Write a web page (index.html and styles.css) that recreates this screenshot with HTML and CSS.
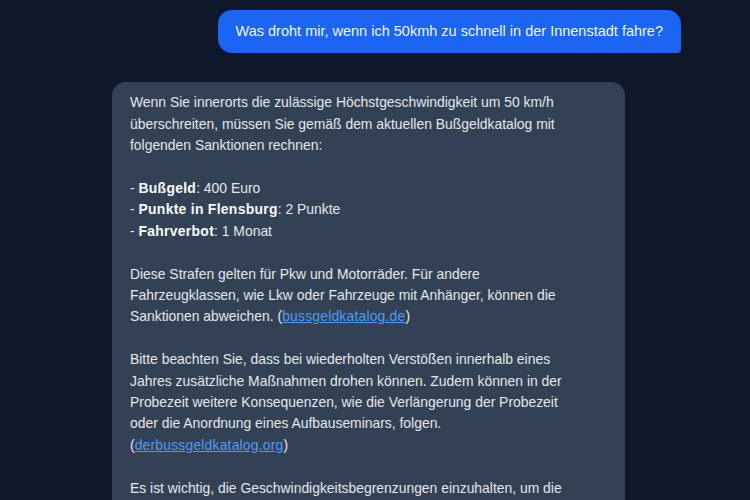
FILE: index.html
```html
<!DOCTYPE html>
<html lang="de">
<head>
<meta charset="utf-8">
<title>Chat</title>
<link rel="stylesheet" href="styles.css">
</head>
<body>
<div class="chat">
  <div class="msg user">Was droht mir, wenn ich 50kmh zu schnell in der Innenstadt fahre?</div>
  <div class="msg bot">
    <p>Wenn Sie innerorts die zulässige Höchstgeschwindigkeit um 50 km/h überschreiten, müssen Sie gemäß dem aktuellen Bußgeldkatalog mit folgenden Sanktionen rechnen:</p>
    <p>- <b>Bußgeld</b>: 400 Euro<br>- <b>Punkte in Flensburg</b>: 2 Punkte<br>- <b>Fahrverbot</b>: 1 Monat</p>
    <p>Diese Strafen gelten für Pkw und Motorräder. Für andere Fahrzeugklassen, wie Lkw oder Fahrzeuge mit Anhänger, können die Sanktionen abweichen. (<a href="#">bussgeldkatalog.de</a>)</p>
    <p>Bitte beachten Sie, dass bei wiederholten Verstößen innerhalb eines Jahres zusätzliche Maßnahmen drohen können. Zudem können in der Probezeit weitere Konsequenzen, wie die Verlängerung der Probezeit oder die Anordnung eines Aufbauseminars, folgen.<br>(<a href="#">derbussgeldkatalog.org</a>)</p>
    <p>Es ist wichtig, die Geschwindigkeitsbegrenzungen einzuhalten, um die Sicherheit aller Verkehrsteilnehmer zu gewährleisten.</p>
  </div>
</div>
</body>
</html>
```

FILE: styles.css
```css
html, body {
  margin: 0;
  height: 100%;
  background: #0f172a;
  overflow: hidden;
}
body {
  font-family: "Liberation Sans", Arial, sans-serif;
  line-height: 21.4px;
  color: #e5e7eb;
}
.chat {
  display: flex;
  flex-direction: column;
  gap: 29px;
  padding: 10px 69px 0 112px;
}
.msg {
  box-sizing: border-box;
}
.user {
  align-self: flex-end;
  font-size: 14.5px;
  background: #1c64f2;
  color: #f1f5ff;
  padding: 11px 18px;
  border-radius: 14px 14px 4px 14px;
}
.bot {
  align-self: flex-start;
  width: 513px;
  font-size: 13.9px;
  background: #334155;
  padding: 10px 56px 10px 18px;
  border-radius: 14px 14px 14px 4px;
}
.bot p {
  margin: 0;
}
.bot p + p {
  margin-top: 21.4px;
}
.bot b {
  font-weight: 700;
  letter-spacing: 0.3px;
  color: #f8fafc;
}
.bot a {
  color: #4f9cf9;
  letter-spacing: 0.2px;
  text-decoration: underline;
}
```
